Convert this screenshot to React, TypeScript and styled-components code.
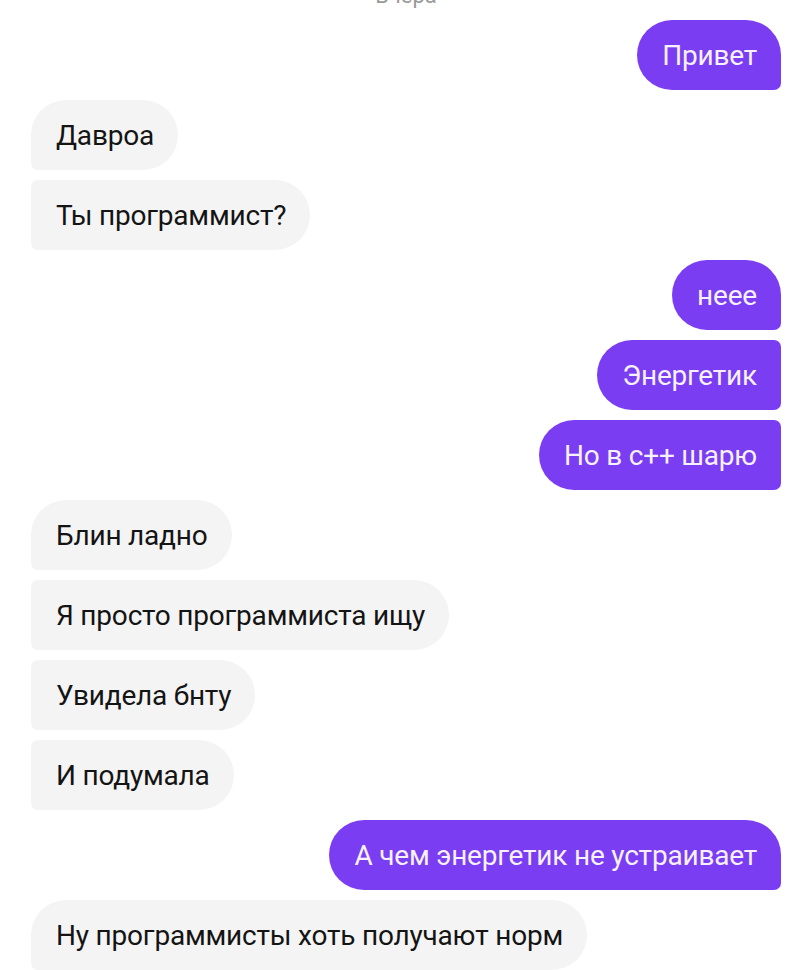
import styled, { createGlobalStyle } from "styled-components";

type Side = "in" | "out";

interface Message {
  side: Side;
  text: string;
  first: boolean;
}

const messages: Message[] = [
  { side: "out", text: "Привет", first: true },
  { side: "in", text: "Давроа", first: true },
  { side: "in", text: "Ты программист?", first: false },
  { side: "out", text: "неее", first: true },
  { side: "out", text: "Энергетик", first: false },
  { side: "out", text: "Но в с++ шарю", first: false },
  { side: "in", text: "Блин ладно", first: true },
  { side: "in", text: "Я просто программиста ищу", first: false },
  { side: "in", text: "Увидела бнту", first: false },
  { side: "in", text: "И подумала", first: false },
  { side: "out", text: "А чем энергетик не устраивает", first: true },
  { side: "in", text: "Ну программисты хоть получают норм", first: true },
];

const GlobalStyle = createGlobalStyle`
  html, body {
    margin: 0;
    background: #ffffff;
    overflow: hidden;
  }
  body {
    font-family: Roboto, "Liberation Sans", sans-serif;
  }
`;

function App() {
  return (
    <>
      <GlobalStyle />
      <Chat>
        <DayLabel>Вчера</DayLabel>
        {messages.map((m, i) => (
          <Row key={i} side={m.side}>
            <Bubble side={m.side} first={m.first}>
              {m.text}
            </Bubble>
          </Row>
        ))}
      </Chat>
    </>
  );
}

const Chat = styled.div`
  display: flex;
  flex-direction: column;
  gap: 10px;
  padding: 0 30px 0 31px;
  height: 970px;
  overflow: hidden;
`;

const DayLabel = styled.div`
  align-self: center;
  margin-top: -19px;
  margin-bottom: -1px;
  height: 30px;
  line-height: 30px;
  font-size: 22px;
  color: #9a9a9a;
`;

const Row = styled.div<{ side: Side }>`
  display: flex;
  justify-content: ${(p) => (p.side === "out" ? "flex-end" : "flex-start")};
`;

const Bubble = styled.div<{ side: Side; first: boolean }>`
  height: 70px;
  display: flex;
  align-items: center;
  padding: 0 24px 0 25px;
  box-sizing: border-box;
  font-size: 28px;
  letter-spacing: -0.2px;
  white-space: nowrap;
  background: ${(p) => (p.side === "out" ? "#7a3df2" : "#f4f4f4")};
  color: ${(p) => (p.side === "out" ? "#f7f1ff" : "#141414")};
  border-radius: ${(p) =>
    p.side === "out"
      ? `35px ${p.first ? "35px" : "7px"} 7px 35px`
      : `${p.first ? "35px" : "7px"} 35px 35px 7px`};
`;

export default App;
